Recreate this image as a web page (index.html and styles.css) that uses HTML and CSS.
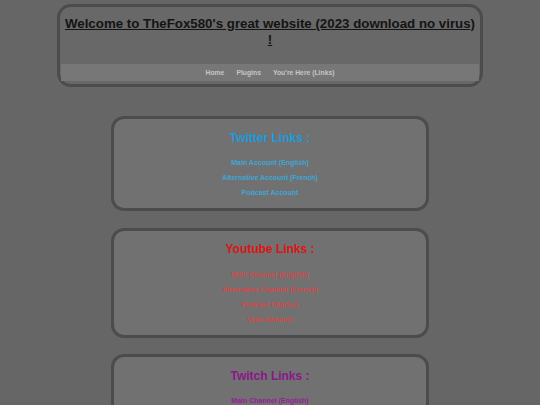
FILE: index.html
```html
<!DOCTYPE html>
<html>
<head>
<meta charset="utf-8">
<link rel="stylesheet" href="styles.css">
</head>
<body>
<header class="site-header">
  <h1 class="title">Welcome to TheFox580's great website (2023 download no virus) !</h1>
  <nav class="nav">
    <a class="nav-link" href="#">Home</a>
    <a class="nav-link" href="#">Plugins</a>
    <a class="nav-link" href="#">You're Here (Links)</a>
  </nav>
</header>
<main class="cards">
  <section class="card twitter">
    <h2 class="card-title">Twitter Links :</h2>
    <ul class="links">
      <li><a href="#">Main Account (English)</a></li>
      <li><a href="#">Alternative Account (French)</a></li>
      <li><a href="#">Podcast Account</a></li>
    </ul>
  </section>
  <section class="card youtube">
    <h2 class="card-title">Youtube Links :</h2>
    <ul class="links">
      <li><a href="#">Main Channel (English)</a></li>
      <li><a href="#">Alternative Channel (French)</a></li>
      <li><a href="#">Podcast Channel</a></li>
      <li><a href="#">Vods Channel</a></li>
    </ul>
  </section>
  <section class="card twitch">
    <h2 class="card-title">Twitch Links :</h2>
    <ul class="links">
      <li><a href="#">Main Channel (English)</a></li>
      <li><a href="#">Alternative Channel (French)</a></li>
    </ul>
  </section>
</main>
</body>
</html>
```
FILE: styles.css
```css
html, body {
  margin: 0;
  padding: 0;
  background: #666666;
  font-family: "Liberation Sans", Arial, sans-serif;
}
body {
  padding-top: 4px;
}
.site-header {
  box-sizing: border-box;
  width: 426px;
  margin: 0 auto;
  border: 3px solid #4c4c4c;
  border-radius: 14px;
  background: #686868;
  padding: 0 0 3px;
}
.title {
  margin: 0;
  padding: 9px 1px 0;
  height: 48px;
  font-size: 13.3px;
  line-height: 16px;
  font-weight: bold;
  color: #141414;
  text-decoration: underline;
  text-align: center;
}
.nav {
  display: flex;
  justify-content: center;
  gap: 12px;
  height: 17px;
  margin: 0 1px;
  align-items: center;
  background: #777777;
}
.nav-link {
  font-size: 6.8px;
  font-weight: bold;
  color: #c6c6c6;
  text-decoration: none;
}
.cards {
  display: flex;
  flex-direction: column;
  align-items: center;
  gap: 16.5px;
  margin-top: 29px;
}
.card {
  box-sizing: border-box;
  width: 318px;
  border: 3px solid #4c4c4c;
  border-radius: 13px;
  background: #717171;
  padding: 11.5px 0 8px;
  text-align: center;
}
.card-title {
  margin: 0;
  font-size: 12px;
  line-height: 14px;
  font-weight: bold;
}
.links {
  list-style: none;
  margin: 10.5px 0 0;
  padding: 0;
}
.links li {
  line-height: 15px;
  font-size: 7px;
  font-weight: bold;
}
.links a {
  text-decoration: none;
}
.twitter .card-title { color: #1c9bdb; }
.twitter .links a { color: #3fa6d6; }
.youtube .card-title { color: #dc1414; }
.youtube .links a { color: #d24a4a; }
.twitch .card-title { color: #8a168c; }
.twitch .links a { color: #981c9a; }
```
